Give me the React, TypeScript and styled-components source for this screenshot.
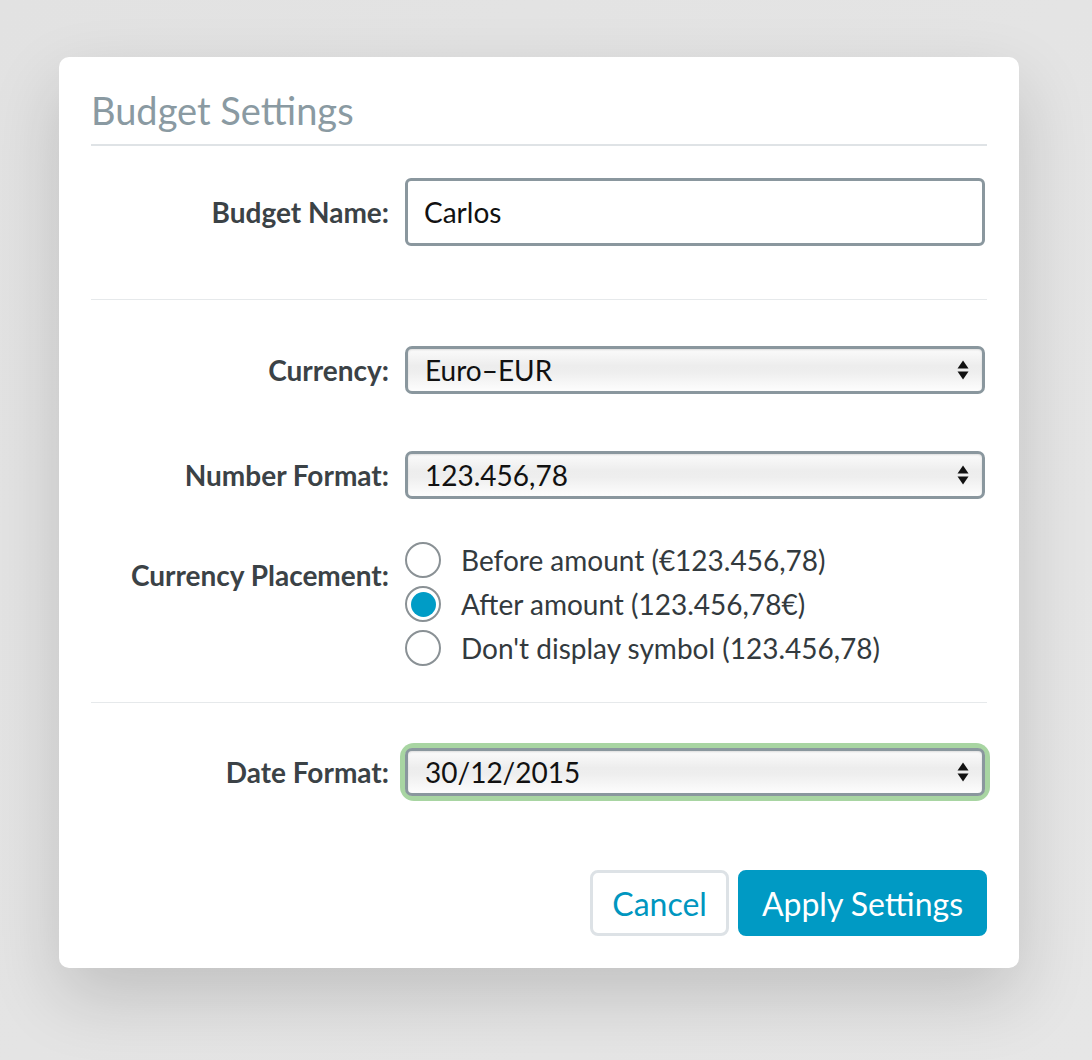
import React from 'react';
import styled, { createGlobalStyle } from 'styled-components';

const GlobalStyle = createGlobalStyle`
  html, body {
    margin: 0;
    padding: 0;
  }
  body {
    font-family: Lato, "Open Sans", sans-serif;
    background: #e4e4e4;
  }
`;

const Page = styled.div`
  min-height: 1060px;
  box-sizing: border-box;
  padding: 57px 0 0 59px;
  background: linear-gradient(135deg, #e2e2e2 0%, #e6e6e6 100%);
`;

const Modal = styled.div`
  width: 960px;
  box-sizing: border-box;
  background: #fff;
  border-radius: 10px;
  padding: 0 32px 32px;
  box-shadow: 0 28px 70px rgba(0, 0, 0, 0.16);
`;

const Header = styled.div`
  border-bottom: 2px solid #dfe3e6;
  padding: 30px 0 11px;
`;

const Title = styled.h1`
  margin: 0;
  font-size: 38px;
  font-weight: 400;
  line-height: 46px;
  color: #8a9aa2;
`;

const Section = styled.div<{ $divider?: boolean }>`
  display: flex;
  flex-direction: column;
  border-bottom: ${props => (props.$divider ? '1px solid #e6e9eb' : 'none')};
`;

const Row = styled.div<{ $mt?: number; $top?: boolean }>`
  display: grid;
  grid-template-columns: 298px 1fr;
  column-gap: 16px;
  align-items: ${props => (props.$top ? 'start' : 'center')};
  margin-top: ${props => props.$mt ?? 0}px;
`;

const Label = styled.label<{ $pt?: number }>`
  text-align: right;
  font-size: 28px;
  font-weight: 700;
  color: #3b4246;
  padding-top: ${props => props.$pt ?? 0}px;
`;

const TextInput = styled.input`
  box-sizing: border-box;
  width: 580px;
  height: 68px;
  border: 3px solid #8a979e;
  border-radius: 6px;
  padding: 0 16px;
  font-family: Lato, sans-serif;
  font-size: 28px;
  color: #111;
  outline: none;
`;

const SelectWrap = styled.div<{ $focused?: boolean }>`
  position: relative;
  width: 580px;
  border-radius: 9px;
  box-shadow: ${props => (props.$focused ? '0 0 0 5px #a8d5a2' : 'none')};
`;

const Select = styled.select`
  appearance: none;
  -webkit-appearance: none;
  display: block;
  box-sizing: border-box;
  width: 100%;
  height: 48px;
  border: 3px solid #8a979e;
  border-radius: 7px;
  padding: 0 40px 0 17px;
  font-family: Lato, sans-serif;
  font-size: 28px;
  color: #111;
  background: linear-gradient(#fbfbfb 0%, #ededed 40%, #eeeeee 55%, #fdfdfd 100%);
  box-shadow: inset 0 1px 2px rgba(0, 0, 0, 0.12);
  outline: none;
`;

const Arrows = styled.svg`
  position: absolute;
  right: 16px;
  top: 50%;
  transform: translateY(-50%);
  pointer-events: none;
`;

const RadioGroup = styled.div`
  display: flex;
  flex-direction: column;
  gap: 8px;
`;

const RadioRow = styled.label`
  display: flex;
  align-items: center;
  gap: 20px;
  height: 36px;
  font-size: 28px;
  color: #333a3e;
  cursor: pointer;
`;

const RadioCircle = styled.span<{ $checked?: boolean }>`
  box-sizing: border-box;
  flex: none;
  width: 36px;
  height: 36px;
  border-radius: 50%;
  border: 2px solid #8a9195;
  background: #fff;
  display: flex;
  align-items: center;
  justify-content: center;

  &::after {
    content: '';
    display: ${props => (props.$checked ? 'block' : 'none')};
    width: 25px;
    height: 25px;
    border-radius: 50%;
    background: #009cc6;
  }
`;

const Spacer = styled.div<{ $h: number }>`
  height: ${props => props.$h}px;
`;

const Footer = styled.div`
  display: flex;
  justify-content: flex-end;
  gap: 9px;
  margin-top: 74px;
`;

const Button = styled.button<{ $primary?: boolean }>`
  height: 66px;
  box-sizing: border-box;
  padding: 0 ${props => (props.$primary ? 21 : 19)}px;
  border-radius: 8px;
  font-family: Lato, sans-serif;
  font-size: 32px;
  cursor: pointer;
  border: 3px solid ${props => (props.$primary ? '#009ac4' : '#dde2e6')};
  background: ${props => (props.$primary ? '#009ac4' : '#fff')};
  color: ${props => (props.$primary ? '#fff' : '#0096bf')};
`;

const SelectArrows = () => (
  <Arrows width="12" height="21" viewBox="0 0 12 21">
    <path d="M6 1 L11.5 9 L0.5 9 Z" fill="#111" />
    <path d="M6 20 L11.5 12 L0.5 12 Z" fill="#111" />
  </Arrows>
);

const placements = [
  'Before amount (€123.456,78)',
  'After amount (123.456,78€)',
  "Don't display symbol (123.456,78)",
];

const App = () => {
  const [placement, setPlacement] = React.useState(1);

  return (
    <Page>
      <GlobalStyle />
      <Modal>
        <Header>
          <Title>Budget Settings</Title>
        </Header>

        <Section $divider>
          <Row $mt={32}>
            <Label>Budget Name:</Label>
            <TextInput defaultValue="Carlos" />
          </Row>
          <Spacer $h={53} />
        </Section>

        <Section $divider>
          <Row $mt={46}>
            <Label>Currency:</Label>
            <SelectWrap>
              <Select defaultValue="EUR">
                <option value="EUR">Euro–EUR</option>
              </Select>
              <SelectArrows />
            </SelectWrap>
          </Row>
          <Row $mt={57}>
            <Label>Number Format:</Label>
            <SelectWrap>
              <Select defaultValue="1">
                <option value="1">123.456,78</option>
              </Select>
              <SelectArrows />
            </SelectWrap>
          </Row>
          <Row $mt={43} $top>
            <Label $pt={16}>Currency Placement:</Label>
            <RadioGroup>
              {placements.map((text, i) => (
                <RadioRow key={text} onClick={() => setPlacement(i)}>
                  <RadioCircle $checked={placement === i} />
                  {text}
                </RadioRow>
              ))}
            </RadioGroup>
          </Row>
          <Spacer $h={36} />
        </Section>

        <Row $mt={45}>
          <Label>Date Format:</Label>
          <SelectWrap $focused>
            <Select defaultValue="1">
              <option value="1">30/12/2015</option>
            </Select>
            <SelectArrows />
          </SelectWrap>
        </Row>

        <Footer>
          <Button>Cancel</Button>
          <Button $primary>Apply Settings</Button>
        </Footer>
      </Modal>
    </Page>
  );
};

export default App;
